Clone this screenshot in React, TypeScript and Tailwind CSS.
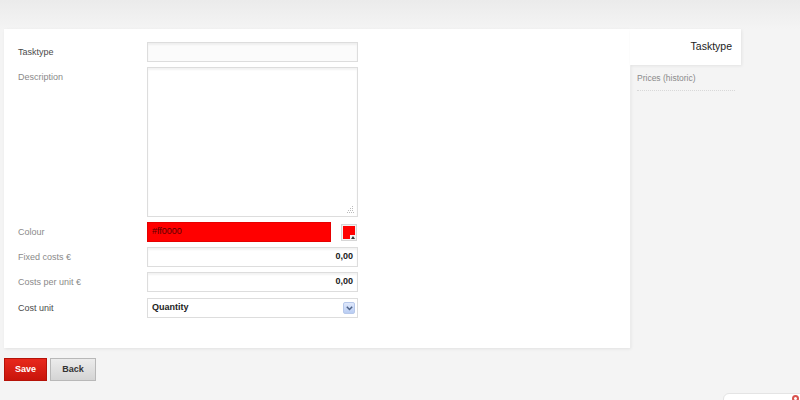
import React from "react";

const font = { fontFamily: '"Liberation Sans", Arial, sans-serif' };

function Label({ children, dark }: { children: React.ReactNode; dark?: boolean }) {
  return (
    <div className={`w-[129px] shrink-0 text-[9px] leading-[19px] ${dark ? "text-[#4a4a4a]" : "text-[#8a8a8a]"}`}>
      {children}
    </div>
  );
}

function TextInput({ value, right }: { value?: string; right?: boolean }) {
  return (
    <div
      className={`w-[211px] h-[20px] border border-[#dddddd] bg-white shadow-[inset_0_2px_2px_rgba(0,0,0,0.05)] flex items-center px-[4px] text-[9px] font-bold text-[#222] ${right ? "justify-end" : ""}`}
    >
      {value}
    </div>
  );
}

export default function App() {
  return (
    <div style={font} className="relative w-[800px] h-[400px] overflow-hidden bg-[#f4f4f4]">
      <div className="h-[29px] bg-gradient-to-b from-[#ebebeb] to-[#f4f4f4]" />
      <div className="flex items-start pl-[4px]">
        {/* main panel */}
        <div className="w-[626px] h-[319px] bg-white shadow-[1px_1px_3px_rgba(0,0,0,0.08)] pt-[13px] pl-[14px]">
          <div className="flex items-center mb-[5px]">
            <Label dark>Tasktype</Label>
            <div className="w-[211px] h-[20px] border border-[#dddddd] bg-[#fbfbfb] shadow-[inset_0_2px_2px_rgba(0,0,0,0.05)]" />
          </div>
          <div className="flex items-start mb-[5px]">
            <div className="w-[129px] shrink-0 text-[9px] pt-[4px] text-[#8a8a8a]">Description</div>
            <div className="relative w-[211px] h-[150px] border border-[#dddddd] bg-white shadow-[inset_0_2px_2px_rgba(0,0,0,0.05)]">
              <svg className="absolute right-[3px] bottom-[3px]" width="7" height="7" viewBox="0 0 7 7">
                <rect x="5" y="0" width="1" height="1" fill="#bbb" />
                <rect x="3" y="2" width="1" height="1" fill="#bbb" />
                <rect x="5" y="2" width="1" height="1" fill="#bbb" />
                <rect x="1" y="4" width="1" height="1" fill="#bbb" />
                <rect x="3" y="4" width="1" height="1" fill="#bbb" />
                <rect x="5" y="4" width="1" height="1" fill="#bbb" />
                <rect x="0" y="6" width="1" height="1" fill="#bbb" />
                <rect x="2" y="6" width="1" height="1" fill="#bbb" />
                <rect x="4" y="6" width="1" height="1" fill="#bbb" />
                <rect x="6" y="6" width="1" height="1" fill="#bbb" />
              </svg>
            </div>
          </div>
          <div className="flex items-center mb-[5px]">
            <Label>Colour</Label>
            <div className="w-[184px] h-[20px] bg-[#ff0000] border border-[#e60000] flex items-center px-[4px] text-[9px] text-[#5a0000]">
              #ff0000
            </div>
            <div className="ml-[10px] relative w-[16px] h-[17px] border border-[#d6d6d6] bg-[#f2f2f2] p-[1px]">
              <div className="w-full h-full bg-[#ff0000]" />
              <div className="absolute right-0 bottom-0 w-[6px] h-[5px] bg-[#f2f2f2] flex items-center justify-center">
                <svg width="4" height="3" viewBox="0 0 4 3">
                  <path d="M0 3 L2 0 L4 3 Z" fill="#333" />
                </svg>
              </div>
            </div>
          </div>
          <div className="flex items-center mb-[5px]">
            <Label>Fixed costs €</Label>
            <TextInput value="0,00" right />
          </div>
          <div className="flex items-center mb-[6px]">
            <Label>Costs per unit €</Label>
            <TextInput value="0,00" right />
          </div>
          <div className="flex items-center">
            <Label dark>Cost unit</Label>
            <div className="w-[211px] h-[20px] border border-[#dddddd] bg-white flex items-center justify-between pl-[4px] pr-[2px] text-[9px] font-bold text-[#222]">
              <span>Quantity</span>
              <div className="w-[12px] h-[12px] rounded-[2px] bg-gradient-to-b from-[#dfe8fb] to-[#b9cdf3] border border-[#b7c8ea] flex items-center justify-center">
                <svg width="7" height="5" viewBox="0 0 7 5">
                  <path d="M0.8 0.8 L3.5 3.5 L6.2 0.8" stroke="#4d6185" strokeWidth="1.5" fill="none" />
                </svg>
              </div>
            </div>
          </div>
        </div>
        {/* right column */}
        <div className="w-[111px] flex flex-col">
          <div className="h-[36px] bg-white shadow-[1px_1px_3px_rgba(0,0,0,0.07)] flex items-center justify-end pr-[9px] text-[10.5px] text-[#222]">
            Tasktype
          </div>
          <div className="h-[283px] border-l border-[#ececec] pt-[7px] px-[6px]">
            <div className="text-[8.5px] text-[#8a8a8a] pb-[5px] border-b border-dotted border-[#d8d8d8]">
              Prices (historic)
            </div>
          </div>
        </div>
      </div>
      {/* buttons */}
      <div className="flex gap-[3px] pl-[4px] mt-[10px]">
        <button className="w-[43px] h-[23px] bg-gradient-to-b from-[#e8281c] to-[#c8140a] border border-[#b51208] text-white text-[9px] font-bold">
          Save
        </button>
        <button className="w-[46px] h-[23px] bg-gradient-to-b from-[#ececec] to-[#d4d4d4] border border-[#b8b8b8] text-[#333] text-[9px] font-bold">
          Back
        </button>
      </div>
      {/* floating widget bottom-right */}
      <div className="absolute left-[723px] top-[393px] w-[90px] h-[20px] rounded-[6px] bg-white border border-[#e4e4e4]">
        <div className="absolute left-[68px] top-[1px] w-[7px] h-[7px] rounded-full border-2 border-[#d9534f]" />
      </div>
    </div>
  );
}
